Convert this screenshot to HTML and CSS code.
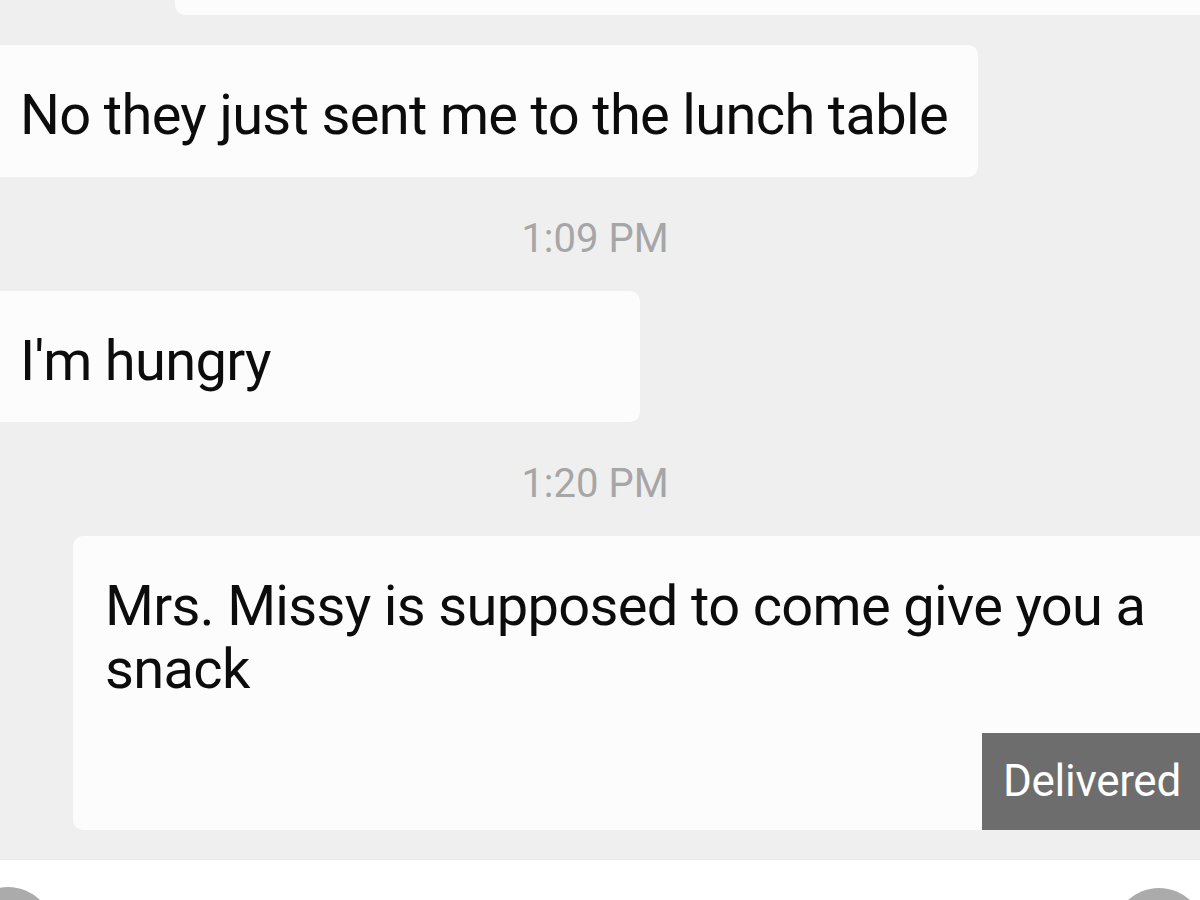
FILE: index.html
```html
<!DOCTYPE html>
<html lang="en">
<head>
<meta charset="utf-8">
<title>Messages</title>
<link rel="stylesheet" href="styles.css">
</head>
<body>
<div class="screen">
  <div class="thread">
    <div class="bubble sent sent-prev"></div>
    <div class="bubble recv recv-wide">
      <p class="msg">No they just sent me to the lunch table</p>
    </div>
    <div class="time">1:09 PM</div>
    <div class="bubble recv recv-short">
      <p class="msg">I'm hungry</p>
    </div>
    <div class="time">1:20 PM</div>
    <div class="bubble sent sent-last">
      <p class="msg">Mrs. Missy is supposed to come give you a snack</p>
      <div class="status">Delivered</div>
    </div>
  </div>
  <div class="composer">
    <span class="round-btn left"></span>
    <span class="round-btn right"></span>
  </div>
</div>
</body>
</html>
```
FILE: styles.css
```css
html, body {
  margin: 0;
  padding: 0;
}
body {
  background: #efefef;
  font-family: Roboto, "Liberation Sans", Arial, sans-serif;
  color: #0c0c0c;
  width: 1200px;
  height: 900px;
  overflow: hidden;
}
.screen {
  display: flex;
  flex-direction: column;
  height: 900px;
}
.thread {
  display: flex;
  flex-direction: column;
  flex: 1;
}
.bubble {
  background: #fcfcfc;
  box-sizing: border-box;
}
.msg {
  margin: 0;
  font-size: 56px;
  line-height: 56px;
  letter-spacing: -0.66px;
}
.sent-prev {
  height: 15px;
  margin-left: 175px;
  border-bottom-left-radius: 10px;
}
.recv {
  border-radius: 0 10px 10px 0;
  padding: 42px 0 0 20px;
}
.recv-wide {
  margin-top: 30px;
  width: 978px;
  height: 132px;
}
.recv-short {
  width: 640px;
  height: 131px;
}
.time {
  margin: 42px 0 32px;
  text-align: center;
  font-size: 40px;
  line-height: 40px;
  color: #a6a6a6;
  padding-right: 10px;
}
.sent-last {
  margin-left: 73px;
  height: 294px;
  border-radius: 10px 0 0 10px;
  display: flex;
  flex-direction: column;
  padding: 43px 0 0 32px;
}
.sent-last .msg {
  line-height: 63px;
  margin-top: -4px;
  padding-right: 40px;
}
.status {
  margin-top: auto;
  align-self: flex-end;
  width: 218px;
  height: 97px;
  box-sizing: border-box;
  background: #6d6d6d;
  color: #ffffff;
  font-size: 44px;
  line-height: 97px;
  padding-left: 21px;
  letter-spacing: -0.3px;
}
.composer {
  margin-top: 29px;
  height: 42px;
  background: #ffffff;
  border-top: 1px solid #e8e8e8;
  display: flex;
  justify-content: space-between;
  align-items: flex-start;
  overflow: hidden;
}
.round-btn {
  display: block;
  width: 92px;
  height: 92px;
  border-radius: 50%;
  background: #ababab;
  margin-top: 27px;
}
.round-btn.left {
  margin-left: -38px;
}
.round-btn.right {
  margin-right: -5px;
  margin-top: 28px;
}
```
